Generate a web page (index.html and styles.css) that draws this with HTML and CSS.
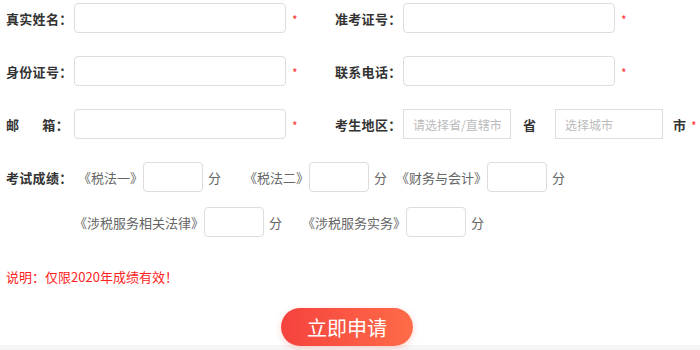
FILE: index.html
```html
<!DOCTYPE html>
<html lang="zh-CN">
<head>
    <meta charset="UTF-8">
    <meta name="viewport" content="width=device-width, initial-scale=1.0">
    <title>成绩申请</title>
    <link rel="stylesheet" href="styles.css">
</head>
<body>
    <div class="apply-form">
        <div class="form-row">
            <div class="field field-left">
                <label class="field-label">真实姓名<span class="colon">：</span></label>
                <input class="field-input" type="text">
                <span class="star">*</span>
            </div>
            <div class="field">
                <label class="field-label">准考证号<span class="colon">：</span></label>
                <input class="field-input" type="text">
                <span class="star">*</span>
            </div>
        </div>

        <div class="form-row">
            <div class="field field-left">
                <label class="field-label">身份证号<span class="colon">：</span></label>
                <input class="field-input" type="text">
                <span class="star">*</span>
            </div>
            <div class="field">
                <label class="field-label">联系电话<span class="colon">：</span></label>
                <input class="field-input" type="text">
                <span class="star">*</span>
            </div>
        </div>

        <div class="form-row">
            <div class="field field-left">
                <label class="field-label"><span class="wide">邮</span>箱<span class="colon">：</span></label>
                <input class="field-input" type="text">
                <span class="star">*</span>
            </div>
            <div class="field">
                <label class="field-label">考生地区<span class="colon">：</span></label>
                <input class="field-input area-input" type="text" placeholder="请选择省/直辖市">
                <span class="area-unit">省</span>
                <input class="field-input area-input" type="text" placeholder="选择城市">
                <span class="area-unit area-unit-last">市</span>
                <span class="star star-close">*</span>
            </div>
        </div>

        <!-- scores -->
        <div class="score-row">
            <label class="field-label score-label">考试成绩<span class="colon">：</span></label>
            <span class="subject">《税法一》</span>
            <input class="score-input" type="text">
            <span class="unit">分</span>
            <span class="subject subject-2">《税法二》</span>
            <input class="score-input" type="text">
            <span class="unit">分</span>
            <span class="subject subject-3">《财务与会计》</span>
            <input class="score-input" type="text">
            <span class="unit">分</span>
        </div>
        <div class="score-row score-row-2">
            <span class="subject">《涉税服务相关法律》</span>
            <input class="score-input" type="text">
            <span class="unit">分</span>
            <span class="subject subject-5">《涉税服务实务》</span>
            <input class="score-input" type="text">
            <span class="unit">分</span>
        </div>

        <p class="note">说明<span class="colon">：</span>仅限2020年成绩有效<span class="colon">！</span></p>

        <div class="submit-wrap">
            <button class="submit-btn" type="button">立即申请</button>
        </div>
    </div>
    <div class="bottom-band"></div>
</body>
</html>
```

FILE: styles.css
```css
body {
    margin: 0;
    background-color: #fff;
    font-family: "Noto Sans CJK SC", "Noto Sans", sans-serif;
    font-size: 13px;
    color: #333;
}

.apply-form {
    padding: 3px 0 0 6px;
    height: 345px;
    box-sizing: border-box;
}

.form-row {
    display: flex;
    align-items: center;
    height: 30px;
    margin-bottom: 23px;
}

.field {
    display: flex;
    align-items: center;
}

.field-left {
    width: 329px;
}

.field-label {
    width: 68px;
    flex-shrink: 0;
    font-weight: bold;
    color: #333;
    letter-spacing: 0.3px;
}

.colon {
    font-family: "Noto Sans CJK TC", sans-serif;
}

.wide {
    margin-right: 23px;
}

.field-input {
    flex-shrink: 0;
    width: 212px;
    height: 30px;
    box-sizing: border-box;
    border: 1px solid #ddd;
    border-radius: 4px;
    padding: 0 9px;
    font-family: inherit;
    font-size: 12px;
    outline: none;
}

.field-input::placeholder {
    color: #bbb;
}

.area-input {
    width: 108px;
    border-radius: 0;
}

.area-unit {
    font-weight: bold;
    margin: 0 19px 0 12px;
}

.area-unit-last {
    margin: 0 0 0 10px;
}

.star {
    color: #f33;
    font-size: 12px;
    margin-left: 6px;
    margin-top: 2px;
}

.star-close {
    margin-left: 5px;
}

/* scores */
.score-row {
    display: flex;
    align-items: center;
    height: 30px;
    margin-bottom: 15px;
    color: #666;
}

.score-row-2 {
    padding-left: 68px;
}

.score-label {
    width: 72px;
}

.subject {
    color: #666;
}

.subject-2 {
    margin-left: 23px;
}

.subject-3 {
    margin-left: 9px;
}

.subject-5 {
    margin-left: 20px;
}

.score-input {
    flex-shrink: 0;
    width: 60px;
    height: 30px;
    box-sizing: border-box;
    border: 1px solid #ddd;
    border-radius: 4px;
    outline: none;
}

.unit {
    margin-left: 5px;
    color: #666;
}

.note {
    margin: 31px 0 0 0;
    line-height: 18px;
    color: #f22;
}

.submit-wrap {
    display: flex;
    justify-content: center;
    margin-top: 22px;
    padding-right: 6px;
}

.submit-btn {
    width: 132px;
    height: 38px;
    margin-right: 6px;
    border: none;
    border-radius: 19px;
    background: linear-gradient(to right, #f5423e, #ff6c48);
    box-shadow: 0 2px 6px rgba(250, 80, 60, 0.25);
    color: #fff;
    font-family: inherit;
    font-size: 20px;
    cursor: pointer;
}

.bottom-band {
    height: 5px;
    background-color: #f5f5f5;
}
```
